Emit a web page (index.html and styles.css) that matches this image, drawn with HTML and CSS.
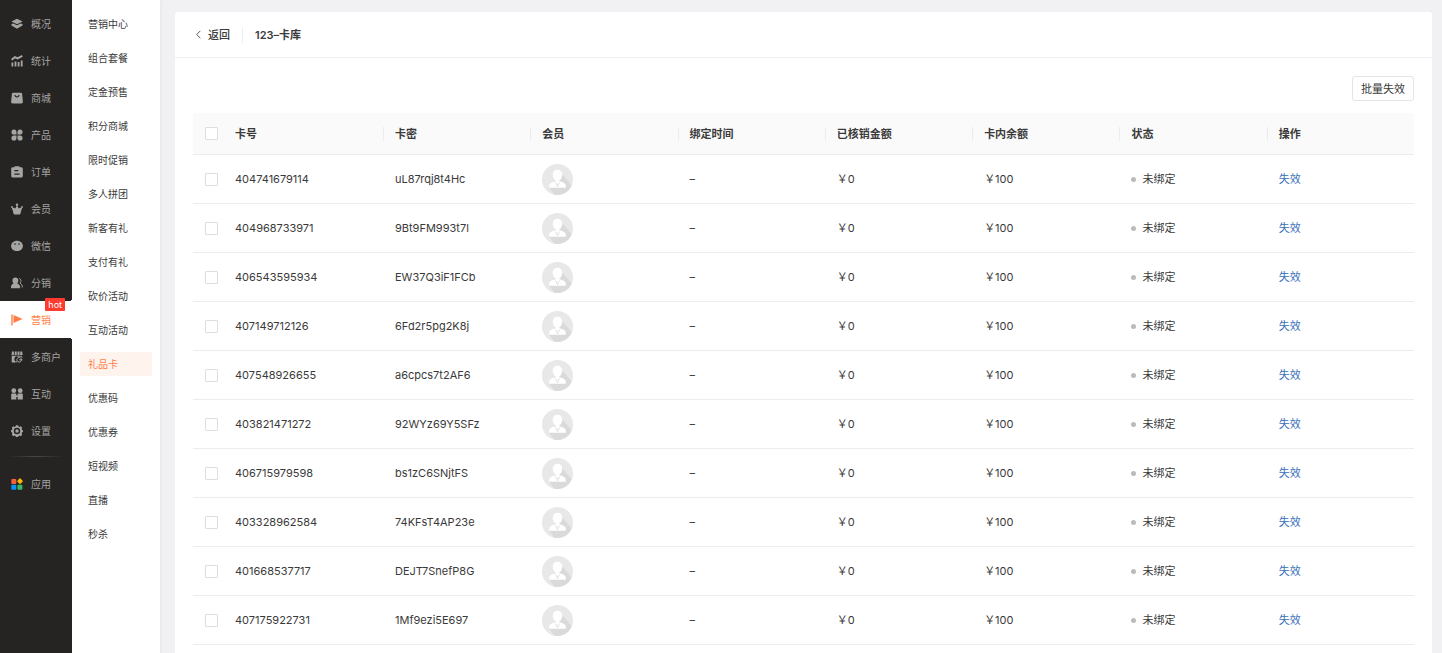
FILE: index.html
```html
<!DOCTYPE html>
<html lang="zh-CN">
<head>
<meta charset="utf-8">
<meta name="viewport" content="width=device-width, initial-scale=1">
<title>123-卡库</title>
<link rel="stylesheet" href="styles.css">
</head>
<body>
<svg class="sprite" aria-hidden="true">
  <symbol id="avatar" viewBox="0 0 30 30">
    <circle cx="15" cy="15" r="15" fill="#e8e8e8"/>
    <path d="M18.500 8.500L28.700 20.500A15 15 0 0 1 12 29.700L7 23z" fill="#dadada"/>
    <path d="M15 5.500c3 0 4.600 2 4.600 4.800 0 1.500-.5 3-1.300 4.200-.7 1.100-1.800 2-3.300 2s-2.600-.9-3.300-2c-.8-1.200-1.300-2.700-1.300-4.200 0-2.800 1.600-4.800 4.600-4.800z" fill="#fff"/>
    <path d="M7 23v-2.200c0-2 2.800-3.300 5.300-3.900L15 20l2.700-3.100c2.500.6 5.300 1.900 5.300 3.900V23z" fill="#fff"/>
    <path d="M12.300 16.500h5.400L15 20z" fill="#fff"/>
    <path d="M13.200 18.200L15 22.200l1.800-4" fill="none" stroke="#ddd" stroke-width=".8"/>
  </symbol>
</svg>
<div class="shell">
  <nav class="nav" aria-label="主导航">
    <a class="nav-item" href="#"><svg class="icon" viewBox="0 0 12 12"><path d="M6 .8l5.600 2.700L6 6.300.4 3.500z"/><path d="M.5 6l1.700-.6L6 7.300l3.800-1.900 1.700.6v1.500L6 10.700.5 7.500z"/></svg>概况</a>
    <a class="nav-item" href="#"><svg class="icon" viewBox="0 0 12 12"><path d="M.5 7.500h1.800v4H.5zM3.600 6.500h1.800v5H3.600zM6.700 7h1.800v4.500H6.700zM9.800 5.500h1.800v6H9.800z"/><path class="line wide" d="M.6 4.700l3.300-2.600 2.700 1.300L11.300.9"/></svg>统计</a>
    <a class="nav-item" href="#"><svg class="icon" viewBox="0 0 12 12"><path fill-rule="evenodd" d="M2 .7h8c.6 0 1 .4 1.100 1l.8 8.100c0 .9-.6 1.600-1.500 1.600H1.600c-.9 0-1.500-.7-1.500-1.600l.8-8.100c.1-.6.500-1 1.100-1zM3.300 3c.2 3.300 5.200 3.300 5.400 0H7.600c-.5 1.700-2.700 1.700-3.200 0z"/></svg>商城</a>
    <a class="nav-item" href="#"><svg class="icon" viewBox="0 0 12 12"><path d="M3 .4c1.500 0 2.500 1 2.500 2.500v2.600H3A2.550 2.550 0 0 1 3 .4zM9 .4a2.550 2.550 0 0 1 0 5.100H6.500V2.900C6.500 1.400 7.500.4 9 .4zM3 6.500h2.500V9A2.550 2.550 0 1 1 3 6.500zM6.500 6.500H9A2.550 2.550 0 1 1 6.500 9z"/></svg>产品</a>
    <a class="nav-item" href="#"><svg class="icon" viewBox="0 0 12 12"><path fill-rule="evenodd" d="M3.500.3h5v1h1.700c.9 0 1.600.6 1.600 1.500v7.300c0 .9-.7 1.500-1.600 1.500H1.800c-.9 0-1.600-.6-1.600-1.500V2.800c0-.9.7-1.500 1.600-1.500h1.700zM3.400 4.100v1.100h4V4.100zM3.400 7.600v1.100h5.200V7.600z"/></svg>订单</a>
    <a class="nav-item" href="#"><svg class="icon" viewBox="0 0 12 12"><path d="M6 2.500l1.800 3 2.300-.9-.7 6c-.1.500-.3.800-.8.800H3.400c-.5 0-.7-.3-.8-.8l-.7-6 2.300.9z"/><path d="M.4 3.700L4 6.400 3 11zM11.600 3.700L8 6.400 9 11z"/><circle cx="6" cy="1.700" r="1.200"/><circle cx="1" cy="4" r=".9"/><circle cx="11" cy="4" r=".9"/></svg>会员</a>
    <a class="nav-item" href="#"><svg class="icon" viewBox="0 0 12 12"><path fill-rule="evenodd" d="M6 .7c3.300 0 5.900 2.300 5.900 5.200S9.300 11.100 6 11.100.1 8.800.1 5.900 2.700.7 6 .7zM4 3.300a.8.8 0 1 0 0 1.600.8.800 0 0 0 0-1.600zM8 3.300a.8.800 0 1 0 0 1.600.8.800 0 0 0 0-1.600z"/></svg>微信</a>
    <a class="nav-item" href="#"><svg class="icon" viewBox="0 0 12 12"><path d="M4.400.6c1.900 0 2.900 1.300 2.900 3 0 1.200-.4 2.300-1.200 3 1.700.5 3 1.600 3 3.300v1.300H0V9.900c0-1.700 1.100-2.800 2.700-3.300-.8-.7-1.200-1.800-1.200-3 0-1.700 1-3 2.900-3z"/><path class="line" d="M8.100 1.500c2.400.7 2.200 3.600.8 4.500 1.600.8 2.400 2 2.400 4.400"/></svg>分销</a>
    <a class="nav-item is-active" href="#" aria-current="page"><svg class="icon" viewBox="0 0 12 12"><path d="M.3.500h1.400v11H.3zM2.500 1l9.200 4.100-9.200 4z"/></svg>营销<span class="hot">hot</span></a>
    <a class="nav-item" href="#"><svg class="icon" viewBox="0 0 12 12"><path d="M1 .4h1.900v3.500H.5zM3.700.4h2v3.500h-2zM6.500.4h2v3.500h-2zM9.200.4h1.900l.6 3.500H9.200z"/><path d="M.7 4.700h4.900A4.300 4.300 0 0 0 3.800 10v1.600H.7z"/><path class="line" d="M5.600 5.200h4.800l.7 1.500M8.100 6.500a2.300 2.300 0 1 0 .1 0M8.200 8.800h3.200M3 10.800h3"/></svg>多商户</a>
    <a class="nav-item" href="#"><svg class="icon" viewBox="0 0 12 12"><circle cx="2.800" cy="2.700" r="2.400"/><circle cx="9.200" cy="2.700" r="2.400"/><path d="M.2 6.500c0-.7.400-1.100 1-1.100h3.200c.6 0 1 .4 1 1.100v1h1.200v-1c0-.7.400-1.100 1-1.100h3.200c.6 0 1 .4 1 1.100v5H6.700V9H5.300v2.500H.2z"/></svg>互动</a>
    <a class="nav-item" href="#"><svg class="icon" viewBox="0 0 12 12"><path fill-rule="evenodd" d="M4.900.2h2.200l.4 1.300 1 .4 1.200-.6 1.500 1.500-.6 1.200.4 1 1.100.3v1.500l-1.100.7-.4 1 .6 1.200-1.500 1.500-1.200-.6-1 .4-.4 1H4.900l-.4-1-1-.4-1.200.6L.8 9.700l.6-1.200-.4-1-1-.7V5.300L1 5l.4-1L.8 2.800l1.500-1.500 1.200.6 1-.4zM6 2.800a3.200 3.200 0 1 0 0 6.400 3.200 3.200 0 0 0 0-6.400z"/><circle cx="6" cy="6" r="1.700"/></svg>设置</a>
    <hr class="nav-rule">
    <a class="nav-item" href="#"><svg class="icon" viewBox="0 0 12 12"><rect x=".3" y=".9" width="5" height="5" rx="1" fill="#f5613c"/><path d="M9 0l3 3.200-3 3-3-3z" fill="#ffb800"/><rect x=".3" y="6.700" width="5" height="5" rx="1" fill="#0a93fb"/><rect x="6.400" y="6.700" width="5" height="5" rx="1" fill="#38b860"/></svg>应用</a>
  </nav>
  <nav class="submenu" aria-label="营销">
    <a class="sub-item" href="#">营销中心</a>
    <a class="sub-item" href="#">组合套餐</a>
    <a class="sub-item" href="#">定金预售</a>
    <a class="sub-item" href="#">积分商城</a>
    <a class="sub-item" href="#">限时促销</a>
    <a class="sub-item" href="#">多人拼团</a>
    <a class="sub-item" href="#">新客有礼</a>
    <a class="sub-item" href="#">支付有礼</a>
    <a class="sub-item" href="#">砍价活动</a>
    <a class="sub-item" href="#">互动活动</a>
    <a class="sub-item is-active" href="#" aria-current="page">礼品卡</a>
    <a class="sub-item" href="#">优惠码</a>
    <a class="sub-item" href="#">优惠券</a>
    <a class="sub-item" href="#">短视频</a>
    <a class="sub-item" href="#">直播</a>
    <a class="sub-item" href="#">秒杀</a>
  </nav>
  <main class="main">
    <section class="panel">
      <header class="panel-head">
        <a class="back" href="#"><svg class="chevron" viewBox="0 0 6 10"><path d="M5 1L1 5l4 4"/></svg>返回</a>
        <h1 class="title">123–卡库</h1>
      </header>
      <div class="panel-body">
        <div class="toolbar"><button class="btn" type="button">批量失效</button></div>
        <table class="cards">
          <colgroup><col class="col-check"><col class="col-number"><col><col><col><col><col><col><col></colgroup>
          <thead>
            <tr><th><input class="check" type="checkbox" aria-label="全选"></th><th>卡号</th><th>卡密</th><th>会员</th><th>绑定时间</th><th>已核销金额</th><th>卡内余额</th><th>状态</th><th>操作</th></tr>
          </thead>
          <tbody>
            <tr><td><input class="check" type="checkbox" aria-label="404741679114"></td><td>404741679114</td><td>uL87rqj8t4Hc</td><td><svg class="avatar"><use href="#avatar"/></svg></td><td>–</td><td>￥0</td><td>￥100</td><td><span class="status">未绑定</span></td><td><a class="action" href="#">失效</a></td></tr>
            <tr><td><input class="check" type="checkbox" aria-label="404968733971"></td><td>404968733971</td><td>9Bt9FM993t7l</td><td><svg class="avatar"><use href="#avatar"/></svg></td><td>–</td><td>￥0</td><td>￥100</td><td><span class="status">未绑定</span></td><td><a class="action" href="#">失效</a></td></tr>
            <tr><td><input class="check" type="checkbox" aria-label="406543595934"></td><td>406543595934</td><td>EW37Q3iF1FCb</td><td><svg class="avatar"><use href="#avatar"/></svg></td><td>–</td><td>￥0</td><td>￥100</td><td><span class="status">未绑定</span></td><td><a class="action" href="#">失效</a></td></tr>
            <tr><td><input class="check" type="checkbox" aria-label="407149712126"></td><td>407149712126</td><td>6Fd2r5pg2K8j</td><td><svg class="avatar"><use href="#avatar"/></svg></td><td>–</td><td>￥0</td><td>￥100</td><td><span class="status">未绑定</span></td><td><a class="action" href="#">失效</a></td></tr>
            <tr><td><input class="check" type="checkbox" aria-label="407548926655"></td><td>407548926655</td><td>a6cpcs7t2AF6</td><td><svg class="avatar"><use href="#avatar"/></svg></td><td>–</td><td>￥0</td><td>￥100</td><td><span class="status">未绑定</span></td><td><a class="action" href="#">失效</a></td></tr>
            <tr><td><input class="check" type="checkbox" aria-label="403821471272"></td><td>403821471272</td><td>92WYz69Y5SFz</td><td><svg class="avatar"><use href="#avatar"/></svg></td><td>–</td><td>￥0</td><td>￥100</td><td><span class="status">未绑定</span></td><td><a class="action" href="#">失效</a></td></tr>
            <tr><td><input class="check" type="checkbox" aria-label="406715979598"></td><td>406715979598</td><td>bs1zC6SNjtFS</td><td><svg class="avatar"><use href="#avatar"/></svg></td><td>–</td><td>￥0</td><td>￥100</td><td><span class="status">未绑定</span></td><td><a class="action" href="#">失效</a></td></tr>
            <tr><td><input class="check" type="checkbox" aria-label="403328962584"></td><td>403328962584</td><td>74KFsT4AP23e</td><td><svg class="avatar"><use href="#avatar"/></svg></td><td>–</td><td>￥0</td><td>￥100</td><td><span class="status">未绑定</span></td><td><a class="action" href="#">失效</a></td></tr>
            <tr><td><input class="check" type="checkbox" aria-label="401668537717"></td><td>401668537717</td><td>DEJT7SnefP8G</td><td><svg class="avatar"><use href="#avatar"/></svg></td><td>–</td><td>￥0</td><td>￥100</td><td><span class="status">未绑定</span></td><td><a class="action" href="#">失效</a></td></tr>
            <tr><td><input class="check" type="checkbox" aria-label="407175922731"></td><td>407175922731</td><td>1Mf9ezi5E697</td><td><svg class="avatar"><use href="#avatar"/></svg></td><td>–</td><td>￥0</td><td>￥100</td><td><span class="status">未绑定</span></td><td><a class="action" href="#">失效</a></td></tr>
          </tbody>
        </table>
      </div>
    </section>
  </main>
</div>
</body>
</html>
```

FILE: styles.css
```css
* { box-sizing: border-box; }
body {
  margin: 0;
  background: #f1f1f4;
  color: #3a3a3a;
  font-family: Inter, "Noto Sans CJK SC", sans-serif;
  font-size: 11px;
  line-height: 16px;
}
a { color: inherit; text-decoration: none; }
.sprite { display: none; }
.shell { display: flex; min-height: 100vh; }

.nav {
  position: relative;
  z-index: 1;
  flex: none;
  width: 72px;
  padding-top: 5px;
  background: #252422;
}
.nav-item {
  position: relative;
  display: flex;
  align-items: center;
  gap: 8px;
  height: 37px;
  padding-left: 11px;
  color: #a5a5a4;
  font-size: 10px;
  white-space: nowrap;
}
.nav-item.is-active { background: #fff; color: #ff7e45; }
.nav-item.is-active::before,
.nav-item.is-active::after {
  content: "";
  position: absolute;
  right: 0;
  width: 3px;
  height: 3px;
}
.nav-item.is-active::before { top: -3px; background: radial-gradient(circle at 0 0, #252422 3px, #fff 3px); }
.nav-item.is-active::after { bottom: -3px; background: radial-gradient(circle at 0 100%, #252422 3px, #fff 3px); }
.icon { flex: none; width: 12px; height: 12px; fill: currentColor; }
.icon .line { fill: none; stroke: currentColor; stroke-width: 1; }
.icon .wide { stroke-width: 2; }
.hot {
  position: absolute;
  top: -3px;
  right: 7px;
  z-index: 1;
  padding: 0 3px;
  border-radius: 1px;
  background: #ff3b30;
  color: #fff;
  font-size: 9px;
  line-height: 13px;
}
.nav-rule {
  height: 1px;
  margin: 7px 7px 8px;
  border: 0;
  background: linear-gradient(to right, transparent, #484745, transparent);
}

.submenu {
  flex: none;
  display: flex;
  flex-direction: column;
  gap: 10px;
  width: 88px;
  padding: 12px 8px;
  background: #fff;
  box-shadow: 0 0 4px #dfe0e4;
}
.sub-item {
  padding: 4px 8px;
  border-radius: 2px;
  font-size: 10px;
}
.sub-item.is-active { background: #fff3ee; color: #ff7e45; }

.main { flex: 1; display: flex; min-width: 0; padding: 12px 10px 0 15px; }
.panel { flex: 1; min-width: 0; border-radius: 3px 3px 0 0; background: #fff; }
.panel-head {
  display: flex;
  align-items: center;
  height: 46px;
  padding: 0 20px;
  border-bottom: 1px solid #f0f0f0;
}
.back { display: flex; align-items: center; gap: 6px; padding-right: 12px; border-right: 1px solid #eee; font-weight: 500; }
.chevron { width: 7px; height: 9px; fill: none; stroke: #444; }
.title { margin: 0 0 0 12px; font-size: 11px; font-weight: 600; }
.panel-body { padding: 18px; }
.toolbar { display: flex; justify-content: flex-end; margin-bottom: 12px; }
.btn {
  height: 25px;
  padding: 0 8px;
  border: 1px solid #e4e4e4;
  border-radius: 3px;
  background: #fff;
  color: inherit;
  font: inherit;
}

.cards { width: 100%; table-layout: fixed; border-collapse: separate; border-spacing: 0; }
.col-check { width: 30px; }
.col-number { width: 160px; }
.cards th, .cards td { padding: 0 12px; text-align: left; vertical-align: middle; border-bottom: 1px solid #ececec; }
.cards th { height: 42px; background: #fafafa; font-weight: 600; }
.cards th:nth-child(n + 3) {
  background: linear-gradient(#ececec, #ececec) left center / 1px 14px no-repeat #fafafa;
}
.cards th:first-child { border-top-left-radius: 3px; }
.cards th:last-child { border-top-right-radius: 3px; }
.cards td { height: 49px; }
.cards th:first-child, .cards td:first-child { padding-right: 0; }
.check {
  appearance: none;
  display: block;
  width: 13px;
  height: 13px;
  margin: 0;
  border: 1px solid #dedede;
  border-radius: 1px;
  background: #fff;
}
.check:checked { background: #ff7e45; }
.avatar { display: block; width: 31px; height: 31px; }
.status { display: flex; align-items: center; gap: 6px; }
.status::before { content: ""; width: 5px; height: 5px; border-radius: 50%; background: #bbb; }
.action { color: #3a70b9; }
```
